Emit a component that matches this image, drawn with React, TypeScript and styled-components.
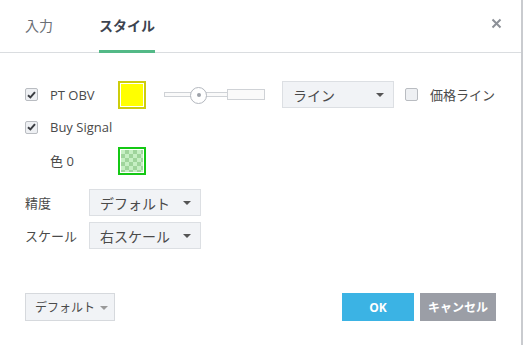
import React from "react";
import styled, { createGlobalStyle } from "styled-components";

const Global = createGlobalStyle`
  html, body { margin: 0; padding: 0; background: #fff; }
  body { font-family: "Open Sans", "Noto Sans CJK JP", sans-serif; color: #4a4a4a; }
  * { box-sizing: border-box; }
`;

const Dialog = styled.div`
  width: 523px;
  height: 345px;
  background: #fff;
  border-right: 2px solid #c9cbcf;
  display: flex;
  flex-direction: column;
`;

const Header = styled.div`
  height: 53px;
  border-bottom: 1px solid #dadde0;
  display: flex;
  align-items: stretch;
  padding: 0 0 0 25px;
  position: relative;
`;

const Tab = styled.div<{ $active?: boolean }>`
  display: flex;
  align-items: center;
  margin-right: 46px;
  font-size: 14px;
  font-weight: ${(p) => (p.$active ? 700 : 400)};
  color: ${(p) => (p.$active ? "#3d4450" : "#6b6f76")};
  border-bottom: 3px solid ${(p) => (p.$active ? "#53b987" : "transparent")};
  margin-bottom: -1px;
  padding-bottom: 1px;
`;

const Close = styled.div`
  position: absolute;
  right: 18px;
  top: 18px;
  width: 12px;
  height: 12px;
  display: flex;
`;

const Body = styled.div`
  flex: 1;
  padding: 28px 0 0 25px;
  display: flex;
  flex-direction: column;
`;

const Row = styled.div<{ $h?: number; $mt?: number }>`
  display: flex;
  align-items: center;
  height: ${(p) => p.$h ?? 27}px;
  margin-top: ${(p) => p.$mt ?? 0}px;
  font-size: 13px;
`;

const Check = styled.div<{ $ml?: number }>`
  width: 13px;
  height: 13px;
  margin-left: ${(p) => p.$ml ?? 0}px;
  border: 1px solid #b9bcc1;
  border-radius: 2px;
  background: #eef0f3;
  display: flex;
  align-items: center;
  justify-content: center;
  flex: none;
`;

const Label = styled.span<{ $w?: number; $ml?: number }>`
  display: inline-block;
  width: ${(p) => (p.$w ? `${p.$w}px` : "auto")};
  margin-left: ${(p) => p.$ml ?? 0}px;
  white-space: nowrap;
  color: #4a4a4a;
`;

const Swatch = styled.div<{ $border: string }>`
  width: 28px;
  height: 28px;
  border: 2px solid ${(p) => p.$border};
  padding: 1px;
  background: #fff;
  flex: none;
`;

const Fill = styled.div<{ $color?: string; $checker?: boolean }>`
  width: 100%;
  height: 100%;
  background-color: ${(p) => p.$color ?? "#c6efc4"};
  background-image: ${(p) =>
    p.$checker
      ? "linear-gradient(45deg, #9fd49c 25%, transparent 25%, transparent 75%, #9fd49c 75%), linear-gradient(45deg, #9fd49c 25%, transparent 25%, transparent 75%, #9fd49c 75%)"
      : "none"};
  background-size: 8px 8px;
  background-position: 0 0, 4px 4px;
`;

const Slider = styled.div`
  margin-left: 18px;
  width: 101px;
  height: 20px;
  display: flex;
  align-items: center;
  position: relative;
  flex: none;
`;

const TrackThin = styled.div`
  width: 63px;
  height: 5px;
  border: 1px solid #cfd2d6;
  border-right: none;
  background: #fafafa;
`;

const TrackWide = styled.div`
  flex: 1;
  height: 11px;
  border: 1px solid #cfd2d6;
  background: #fafafa;
`;

const Thumb = styled.div`
  position: absolute;
  left: 26px;
  top: 2px;
  width: 17px;
  height: 17px;
  border-radius: 50%;
  border: 1px solid #b3b7be;
  background: #fff;
  display: flex;
  align-items: center;
  justify-content: center;
  &::after {
    content: "";
    width: 4px;
    height: 4px;
    border-radius: 50%;
    background: #9ea2a9;
  }
`;

const Select = styled.div<{ $w: number; $ml?: number }>`
  width: ${(p) => p.$w}px;
  height: 27px;
  margin-left: ${(p) => p.$ml ?? 0}px;
  background: #f1f3f6;
  border: 1px solid #dcdfe3;
  display: flex;
  align-items: center;
  justify-content: space-between;
  padding: 0 9px 0 10px;
  font-size: 14px;
  color: #4a4a4a;
  flex: none;
`;

const Caret = styled.span<{ $color?: string }>`
  width: 0;
  height: 0;
  border-left: 4px solid transparent;
  border-right: 4px solid transparent;
  border-top: 4px solid ${(p) => p.$color ?? "#555"};
  margin-top: 1px;
`;

const Footer = styled.div`
  height: 52px;
  padding: 0 25px 0 25px;
  display: flex;
  align-items: flex-start;
  justify-content: space-between;
  flex: none;
`;

const Buttons = styled.div`
  display: flex;
  gap: 6px;
`;

const Btn = styled.div<{ $bg: string; $w: number }>`
  width: ${(p) => p.$w}px;
  height: 28px;
  background: ${(p) => p.$bg};
  color: #fff;
  font-size: 12px;
  font-weight: 700;
  display: flex;
  align-items: center;
  justify-content: center;
`;

const DefaultBtn = styled.div`
  width: 90px;
  height: 28px;
  background: #f1f3f6;
  border: 1px solid #d6d9dd;
  display: flex;
  align-items: center;
  justify-content: space-between;
  padding: 0 6px 0 9px;
  font-size: 12px;
  color: #4a4a4a;
`;

const Tick = () => (
  <svg width="9" height="8" viewBox="0 0 9 8">
    <path d="M1 4.2 L3.4 6.4 L8 1.2" stroke="#3a3d42" strokeWidth="2" fill="none" />
  </svg>
);

export default function App() {
  return (
    <>
      <Global />
      <Dialog>
        <Header>
          <Tab>入力</Tab>
          <Tab $active>スタイル</Tab>
          <Close>
            <svg width="11" height="11" viewBox="0 0 11 11">
              <path d="M1.5 1.5 L9.5 9.5 M9.5 1.5 L1.5 9.5" stroke="#8c9097" strokeWidth="2" />
            </svg>
          </Close>
        </Header>
        <Body>
          <Row>
            <Check>
              <Tick />
            </Check>
            <Label $w={68} $ml={12}>PT OBV</Label>
            <Swatch $border="#cdcd0c">
              <Fill $color="#ffff00" />
            </Swatch>
            <Slider>
              <TrackThin />
              <TrackWide />
              <Thumb />
            </Slider>
            <Select $w={112} $ml={17}>
              ライン
              <Caret />
            </Select>
            <Check $ml={11} />
            <Label $ml={12}>価格ライン</Label>
          </Row>
          <Row $h={20} $mt={9}>
            <Check>
              <Tick />
            </Check>
            <Label $ml={12}>Buy Signal</Label>
          </Row>
          <Row $mt={10}>
            <Label $w={68} $ml={25}>色 0</Label>
            <Swatch $border="#14c814">
              <Fill $checker />
            </Swatch>
          </Row>
          <Row $mt={15}>
            <Label $w={64}>精度</Label>
            <Select $w={112}>
              デフォルト
              <Caret />
            </Select>
          </Row>
          <Row $mt={6}>
            <Label $w={64}>スケール</Label>
            <Select $w={112}>
              右スケール
              <Caret />
            </Select>
          </Row>
        </Body>
        <Footer>
          <DefaultBtn>
            デフォルト
            <Caret $color="#999" />
          </DefaultBtn>
          <Buttons>
            <Btn $bg="#3bb3e4" $w={72}>OK</Btn>
            <Btn $bg="#9b9ea6" $w={76}>キャンセル</Btn>
          </Buttons>
        </Footer>
      </Dialog>
    </>
  );
}
